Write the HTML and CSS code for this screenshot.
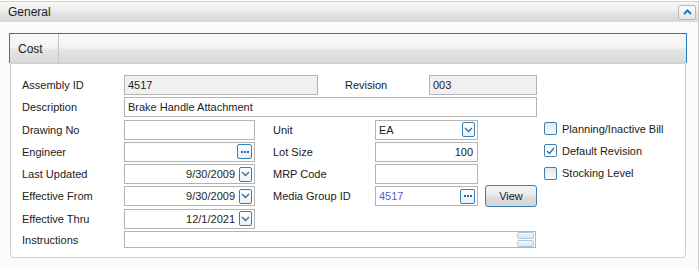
FILE: index.html
```html
<!DOCTYPE html>
<html lang="en">
<head>
    <meta charset="UTF-8">
    <title>Assembly - General</title>
    <link rel="stylesheet" href="styles.css">
</head>
<body>
    <div class="panel">
        <div class="panel-head">
            <span>General</span>
            <button class="collapse-btn" title="Collapse">
                <svg width="9" height="6" viewBox="0 0 9 6"><path d="M1 5 L4.5 1.5 L8 5" fill="none" stroke="#1a78c2" stroke-width="2"/></svg>
            </button>
        </div>
        <div class="panel-body">
            <div class="tabstrip">
                <div class="tab">Cost</div>
            </div>
            <div class="tab-page">
                <div class="form">
                    <div class="row">
                        <label class="lbl">Assembly ID</label>
                        <div class="field readonly w-assembly">4517</div>
                        <label class="lbl lbl-revision">Revision</label>
                        <div class="field readonly w-revision">003</div>
                    </div>
                    <div class="row">
                        <label class="lbl">Description</label>
                        <div class="field w-wide">Brake Handle Attachment</div>
                    </div>
                    <div class="row">
                        <label class="lbl">Drawing No</label>
                        <div class="field w-col1"></div>
                        <label class="lbl lbl2">Unit</label>
                        <div class="field w-col2">
                            <span class="value">EA</span>
                            <span class="drop-btn"><svg width="9" height="6" viewBox="0 0 9 6"><path d="M1 1 L4.5 4.5 L8 1" fill="none" stroke="#3d6f9c" stroke-width="1.4"/></svg></span>
                        </div>
                        <label class="check"><span class="box"></span>Planning/Inactive Bill</label>
                    </div>
                    <div class="row">
                        <label class="lbl">Engineer</label>
                        <div class="field w-col1">
                            <span class="value"></span>
                            <span class="dots-btn"><i></i><i></i><i></i></span>
                        </div>
                        <label class="lbl lbl2">Lot Size</label>
                        <div class="field w-col2 right">100</div>
                        <label class="check"><span class="box checked"><svg width="9" height="8" viewBox="0 0 9 8"><path d="M1 4 L3.5 6.5 L8 1" fill="none" stroke="#2a6fb5" stroke-width="1.4"/></svg></span>Default Revision</label>
                    </div>
                    <div class="row">
                        <label class="lbl">Last Updated</label>
                        <div class="field w-col1 date">
                            <span class="value">9/30/2009</span>
                            <span class="drop-btn"><svg width="9" height="6" viewBox="0 0 9 6"><path d="M1 1 L4.5 4.5 L8 1" fill="none" stroke="#3d6f9c" stroke-width="1.4"/></svg></span>
                        </div>
                        <label class="lbl lbl2">MRP Code</label>
                        <div class="field w-col2"></div>
                        <label class="check"><span class="box"></span>Stocking Level</label>
                    </div>
                    <div class="row">
                        <label class="lbl">Effective From</label>
                        <div class="field w-col1 date">
                            <span class="value">9/30/2009</span>
                            <span class="drop-btn"><svg width="9" height="6" viewBox="0 0 9 6"><path d="M1 1 L4.5 4.5 L8 1" fill="none" stroke="#3d6f9c" stroke-width="1.4"/></svg></span>
                        </div>
                        <label class="lbl lbl2">Media Group ID</label>
                        <div class="field w-col2">
                            <span class="value link">4517</span>
                            <span class="dots-btn"><i></i><i></i><i></i></span>
                        </div>
                        <button class="view-btn">View</button>
                    </div>
                    <div class="row">
                        <label class="lbl">Effective Thru</label>
                        <div class="field w-col1 date">
                            <span class="value">12/1/2021</span>
                            <span class="drop-btn"><svg width="9" height="6" viewBox="0 0 9 6"><path d="M1 1 L4.5 4.5 L8 1" fill="none" stroke="#3d6f9c" stroke-width="1.4"/></svg></span>
                        </div>
                    </div>
                    <div class="row row-memo">
                        <label class="lbl">Instructions</label>
                        <div class="field memo">
                            <span class="value"></span>
                            <span class="spin"><i></i><i></i></span>
                        </div>
                    </div>
                </div>
            </div>
        </div>
    </div>
</body>
</html>
```
FILE: styles.css
```css
* {
    margin: 0;
    padding: 0;
    box-sizing: border-box;
}

body {
    background-color: #fff;
    font-family: 'Liberation Sans', Arial, sans-serif;
    font-size: 11px;
    color: #1b1b1b;
}

.panel {
    width: 699px;
    height: 270px;
    margin-top: 1px;
    border-top: 1px solid #d2d2d2;
    border-right: 1px solid #cfcfcf;
    background: #fbfbfb;
}

.panel-head {
    height: 20px;
    display: flex;
    align-items: center;
    justify-content: space-between;
    padding: 0 2px 0 8px;
    background: linear-gradient(#f6f6f6 0%, #efefef 40%, #e3e3e3 55%, #d9d9d9 100%);
    font-size: 12px;
}

.collapse-btn {
    width: 18px;
    height: 15px;
    border: 1px solid #b9b9b9;
    border-radius: 2px;
    background: linear-gradient(#fafafa, #e6e6e6);
    display: flex;
    align-items: center;
    justify-content: center;
}

.panel-body {
    padding: 11px 11px 0 9px;
}

.tabstrip {
    height: 30px;
    border: 1px solid #1a7fc1;
    border-bottom: none;
    background: linear-gradient(#f8f8f8 0%, #f4f4f4 45%, #e4e4e4 55%, #d8d8d8 100%);
    display: flex;
}

.tab {
    width: 49px;
    padding-left: 8px;
    display: flex;
    align-items: center;
    border-right: 1px solid #c4c4c4;
    font-size: 12px;
}

.tab-page {
    margin: 0 1px;
    height: 195px;
    border: 1px solid #cdcdcd;
    border-radius: 0 0 4px 4px;
    background: #fff;
    padding: 11px 0 0 11px;
}

.form {
    display: flex;
    flex-direction: column;
    gap: 2.3px;
}

.row {
    display: flex;
    align-items: center;
    height: 20px;
}

.row-memo {
    height: 17px;
}

.lbl {
    width: 102px;
    flex-shrink: 0;
}

.lbl2 {
    margin-left: 18px;
}

.lbl-revision {
    width: 84px;
    margin-left: 27px;
}

.field {
    height: 20px;
    border: 1px solid #b4b4b4;
    background: #fff;
    display: flex;
    align-items: center;
    padding: 0 2px 0 3px;
    color: #1e1e1e;
    flex-shrink: 0;
}

.field .value {
    flex: 1;
}

.readonly {
    background: #f0f0f0;
}

.right {
    justify-content: flex-end;
    padding-right: 4px;
}

.date .value {
    text-align: right;
    padding-right: 4px;
}

.link {
    color: #5b5bd6;
}

.w-assembly { width: 194px; }
.w-revision { width: 108px; }
.w-wide { width: 413px; }
.w-col1 { width: 131px; }
.w-col2 { width: 103px; }

.memo {
    width: 412px;
    height: 17px;
    padding-right: 1px;
}

.drop-btn {
    width: 13px;
    height: 15px;
    border: 1px solid #3c7fb1;
    border-radius: 2px;
    background: linear-gradient(#ffffff, #eaf2f9);
    display: flex;
    align-items: center;
    justify-content: center;
}

.dots-btn {
    width: 15px;
    height: 15px;
    border: 1px solid #3c7fb1;
    border-radius: 2px;
    background: linear-gradient(#ffffff, #e8eef4);
    display: flex;
    align-items: center;
    justify-content: center;
    gap: 1px;
}

.dots-btn i {
    width: 2px;
    height: 2px;
    background: #1d6fb8;
}

.spin {
    width: 17px;
    height: 15px;
    display: flex;
    flex-direction: column;
    gap: 1px;
}

.spin i {
    flex: 1;
    border: 1px solid #a9cbe6;
    border-radius: 2px;
    background: linear-gradient(#f6f6f6, #e4e4e4);
}

.check {
    margin-left: 66px;
    display: flex;
    align-items: center;
    gap: 5px;
    margin-top: -2px;
}

.box {
    width: 13px;
    height: 13px;
    border: 1px solid #3c7fb1;
    border-radius: 2px;
    background: linear-gradient(#e9e9e9, #f9f9f9);
    display: flex;
    align-items: center;
    justify-content: center;
}

.box.checked {
    background: #fff;
}

.view-btn {
    margin-left: 7px;
    width: 52px;
    height: 22px;
    border: 1px solid #3c7fb1;
    border-radius: 3px;
    background: linear-gradient(#f4f4f4 0%, #ececec 45%, #dedede 55%, #d4d4d4 100%);
    font-family: 'Liberation Sans', Arial, sans-serif;
    font-size: 11px;
    color: #1b1b1b;
}
```
